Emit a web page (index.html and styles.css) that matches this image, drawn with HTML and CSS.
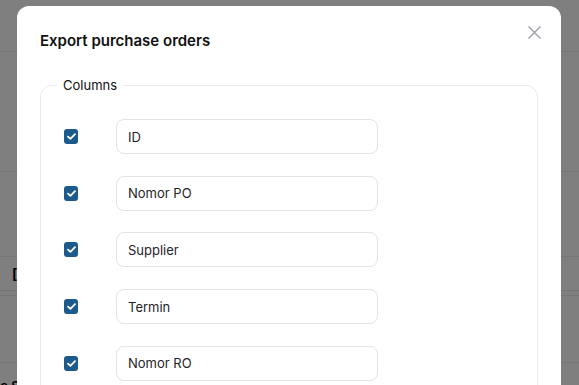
FILE: index.html
```html
<!DOCTYPE html>
<html lang="id">
<head>
<meta charset="utf-8">
<title>Export purchase orders</title>
<link rel="stylesheet" href="styles.css">
</head>
<body>
<div class="page">
  <div class="topbar"></div>
  <div class="band"></div>
  <div class="filters">
    <div class="filter-box"><span class="glyph">[</span></div>
  </div>
  <div class="row"></div>
  <div class="row last"><span class="cell-text">Pe Supplier</span></div>
</div>

<div class="overlay"></div>

<div class="modal" role="dialog" aria-labelledby="title">
  <div class="modal-head">
    <h2 id="title" class="modal-title">Export purchase orders</h2>
    <button class="close" aria-label="Close">
      <svg width="13" height="13" viewBox="0 0 13 13"><path d="M0.5 0.5L12.5 12.5M12.5 0.5L0.5 12.5" stroke="#9a9ca3" stroke-width="1.3" fill="none"/></svg>
    </button>
  </div>
  <fieldset class="columns">
    <legend>Columns</legend>
    <div class="col-list">
      <div class="col-row"><span class="check"><svg width="9" height="7" viewBox="0 0 9 7"><path d="M1 3.6L3.4 5.8L8 1.2" stroke="#fff" stroke-width="1.8" fill="none" stroke-linecap="round" stroke-linejoin="round"/></svg></span><div class="field">ID</div></div>
      <div class="col-row"><span class="check"><svg width="9" height="7" viewBox="0 0 9 7"><path d="M1 3.6L3.4 5.8L8 1.2" stroke="#fff" stroke-width="1.8" fill="none" stroke-linecap="round" stroke-linejoin="round"/></svg></span><div class="field">Nomor PO</div></div>
      <div class="col-row"><span class="check"><svg width="9" height="7" viewBox="0 0 9 7"><path d="M1 3.6L3.4 5.8L8 1.2" stroke="#fff" stroke-width="1.8" fill="none" stroke-linecap="round" stroke-linejoin="round"/></svg></span><div class="field">Supplier</div></div>
      <div class="col-row"><span class="check"><svg width="9" height="7" viewBox="0 0 9 7"><path d="M1 3.6L3.4 5.8L8 1.2" stroke="#fff" stroke-width="1.8" fill="none" stroke-linecap="round" stroke-linejoin="round"/></svg></span><div class="field">Termin</div></div>
      <div class="col-row"><span class="check"><svg width="9" height="7" viewBox="0 0 9 7"><path d="M1 3.6L3.4 5.8L8 1.2" stroke="#fff" stroke-width="1.8" fill="none" stroke-linecap="round" stroke-linejoin="round"/></svg></span><div class="field">Nomor RO</div></div>
      <div class="col-row"><span class="check"><svg width="9" height="7" viewBox="0 0 9 7"><path d="M1 3.6L3.4 5.8L8 1.2" stroke="#fff" stroke-width="1.8" fill="none" stroke-linecap="round" stroke-linejoin="round"/></svg></span><div class="field">Tanggal</div></div>
    </div>
  </fieldset>
</div>
</body>
</html>
```

FILE: styles.css
```css
* { box-sizing: border-box; }

html, body {
  margin: 0;
  padding: 0;
  height: 100%;
  overflow: hidden;
  background: #ffffff;
  font-family: Inter, "Noto Sans", sans-serif;
  color: #1f2328;
}

.page {
  display: flex;
  flex-direction: column;
}

.topbar {
  height: 52px;
  border-bottom: 1px solid #ececec;
}

.band {
  height: 120px;
  border-bottom: 1px solid #ececec;
}

.filters {
  height: 124px;
  padding-top: 84px;
  border-bottom: 1px solid #ececec;
}

.filter-box {
  height: 35px;
  border-top: 1px solid #ececec;
  border-bottom: 1px solid #ececec;
  padding-left: 12px;
  display: flex;
  align-items: center;
}

.glyph {
  font-size: 14px;
  color: #000;
  font-weight: 700;
  line-height: 1;
}

.row {
  height: 67px;
  border-bottom: 1px solid #ececec;
}

.row.last {
  border-bottom: none;
  padding-top: 12px;
}

.cell-text {
  font-size: 13px;
  font-weight: 600;
  margin-left: -8px;
  color: #000;
}

.overlay {
  position: fixed;
  inset: 0;
  background: rgba(0, 0, 0, 0.5);
}

.modal {
  position: fixed;
  left: 17px;
  top: 6px;
  width: 544px;
  height: 500px;
  background: #ffffff;
  border-radius: 12px;
  padding: 24px 23px;
}

.modal-head {
  display: flex;
  justify-content: space-between;
  align-items: flex-start;
}

.modal-title {
  margin: 0;
  font-size: 15px;
  line-height: 22px;
  font-weight: 600;
  color: #111;
}

.close {
  border: none;
  background: none;
  padding: 0;
  margin: -4px -3px 0 0;
  width: 13px;
  height: 13px;
  display: flex;
  cursor: pointer;
}

.columns {
  margin: 23px 0 0;
  border: 1px solid #ebebeb;
  border-radius: 12px;
  padding: 0 22px 0 22px;
  min-width: 0;
}

.columns legend {
  font-size: 13px;
  line-height: 20px;
  padding: 0 6px;
  margin-left: -6px;
  color: #111;
}

.col-list {
  display: flex;
  flex-direction: column;
  gap: 21.7px;
  padding-top: 24px;
  padding-left: 1px;
}

.col-row {
  display: flex;
  align-items: center;
  gap: 38px;
}

.check {
  width: 14px;
  height: 15px;
  border-radius: 3px;
  background: #1d5a8c;
  display: flex;
  align-items: center;
  justify-content: center;
  flex: none;
}

.field {
  width: 262px;
  height: 35px;
  border: 1px solid #e3e3e3;
  border-radius: 8px;
  padding: 0 11px;
  display: flex;
  align-items: center;
  font-size: 13px;
  color: #1f2328;
}
```
